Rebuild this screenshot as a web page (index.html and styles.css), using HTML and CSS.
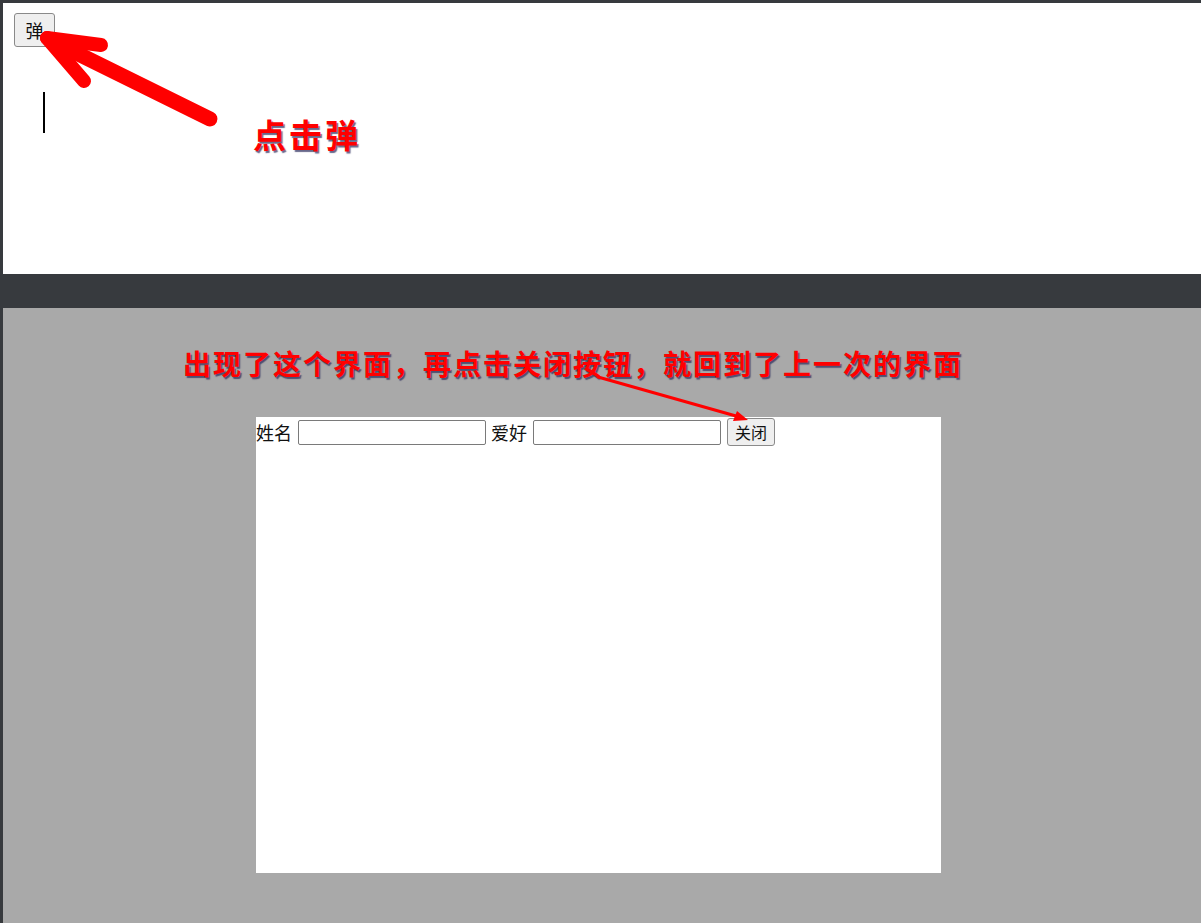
FILE: index.html
```html
<!DOCTYPE html>
<html lang="zh-CN">
<head>
<meta charset="utf-8">
<title>弹</title>
<link rel="stylesheet" href="styles.css">
</head>
<body>
<div class="page">
  <section class="top-panel">
    <button class="btn-pop" type="button">弹</button>
    <div class="top-row">
      <div class="caret"></div>
      <div class="note note-top">点击弹</div>
    </div>
  </section>
  <section class="overlay-panel">
    <div class="note note-bottom">出现了这个界面，再点击关闭按钮，就回到了上一次的界面</div>
    <div class="modal">
      <div class="form-row">
        <span class="label">姓名</span>
        <input class="field field-name" type="text">
        <span class="label">爱好</span>
        <input class="field field-hobby" type="text">
        <button class="btn-close" type="button">关闭</button>
      </div>
    </div>
  </section>
  <svg class="arrows" width="1201" height="923" viewBox="0 0 1201 923" xmlns="http://www.w3.org/2000/svg">
    <g stroke="#ff0000" stroke-linecap="round" stroke-linejoin="round" fill="none">
      <path d="M210 116 L50 37" stroke-width="15"/>
      <path d="M47 35 L101 42" stroke-width="14"/>
      <path d="M47 35 L84 78" stroke-width="14"/>
      <path d="M598 374 L736 413" stroke-width="3"/>
    </g>
    <path d="M748 417 L733 418 L737 408 Z" fill="#ff0000"/>
  </svg>
</div>
</body>
</html>
```
FILE: styles.css
```css
html, body {
  margin: 0;
  padding: 0;
}
body {
  background: #373a3e;
  width: 1201px;
  height: 923px;
  overflow: hidden;
  font-family: "Noto Sans CJK SC", "Noto Sans", sans-serif;
}
.page {
  position: relative;
  width: 1201px;
  height: 923px;
}
.top-panel {
  margin: 3px 0 0 3px;
  height: 271px;
  background: #ffffff;
  padding: 10px 0 0 11px;
  box-sizing: border-box;
}
.btn-pop {
  display: block;
  width: 41px;
  height: 34px;
  padding: 0;
  margin: 0;
  font-family: "Noto Sans CJK SC", sans-serif;
  font-size: 18px;
  line-height: 1;
  color: #111;
  background: #efefef;
  border: 1px solid #8a8a8a;
  border-radius: 3px;
}
.top-row {
  display: flex;
  align-items: flex-start;
  margin-top: 45px;
}
.caret {
  width: 2px;
  height: 41px;
  background: #000;
  margin-left: 29px;
}
.note {
  color: #ff0000;
  font-family: "Noto Sans CJK SC", sans-serif;
  font-weight: 700;
  line-height: 1;
  text-shadow: 1.5px 1.5px 1px rgba(40, 40, 90, 0.7);
  white-space: nowrap;
}
.note-top {
  font-size: 33px;
  letter-spacing: 3px;
  margin-left: 208px;
  margin-top: 26px;
}
.overlay-panel {
  margin: 34px 0 0 3px;
  height: 615px;
  background: #a9a9a9;
  padding-top: 41px;
  box-sizing: border-box;
}
.note-bottom {
  font-size: 28px;
  letter-spacing: 2px;
  margin-left: 180px;
  height: 28px;
}
.modal {
  margin: 40px 0 0 253px;
  width: 685px;
  height: 456px;
  background: #ffffff;
}
.form-row {
  display: flex;
  align-items: center;
  height: 30px;
  font-size: 18px;
  color: #111;
}
.label {
  line-height: 1;
  margin-right: 6px;
}
.field {
  width: 188px;
  height: 25px;
  box-sizing: border-box;
  margin: 0;
  padding: 0 3px;
  border: 1px solid #7a7a7a;
  border-radius: 2px;
  background: #fff;
}
.field-name {
  margin-right: 5px;
}
.field-hobby {
  margin-right: 6px;
}
.btn-close {
  width: 48px;
  height: 28px;
  margin: 0;
  padding: 0;
  font-family: "Noto Sans CJK SC", sans-serif;
  font-size: 16px;
  line-height: 1;
  color: #111;
  background: #efefef;
  border: 1px solid #8a8a8a;
  border-radius: 3px;
}
.arrows {
  position: absolute;
  left: 0;
  top: 0;
  pointer-events: none;
}
```
